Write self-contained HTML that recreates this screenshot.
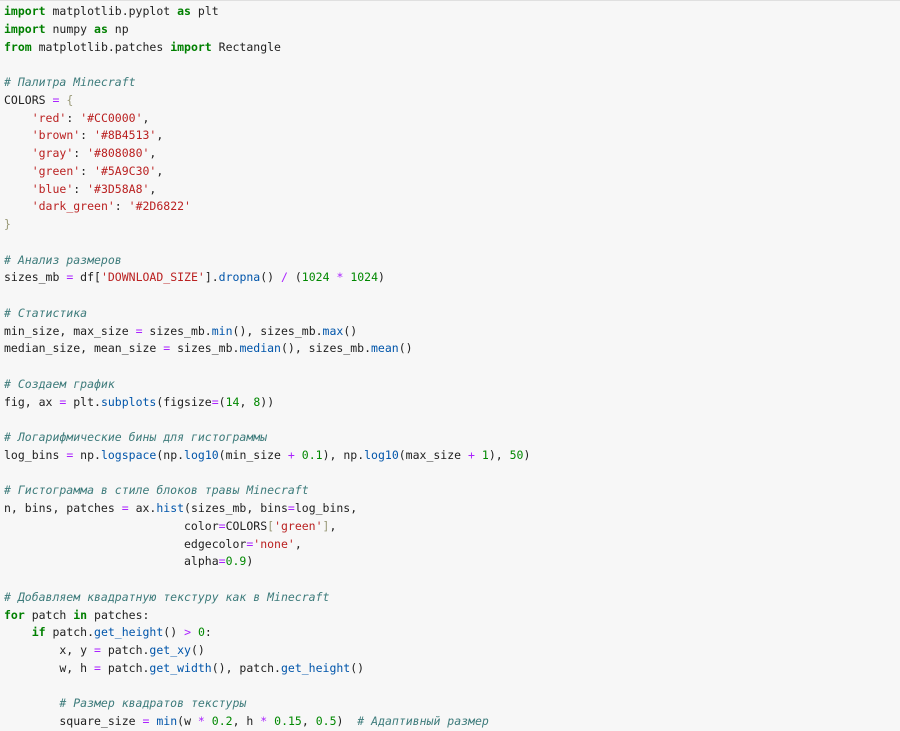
<!DOCTYPE html>
<html><head><meta charset="utf-8"><style>
html,body{margin:0;padding:0;background:#f7f7f7;width:900px;height:727px;overflow:hidden}
.top{position:absolute;top:0;left:0;width:900px;height:1px;background:#e0e0e0}
pre{position:absolute;left:4px;top:3px;margin:0;font-family:"DejaVu Sans Mono","Liberation Mono",monospace;font-size:11.5px;line-height:17.75px;color:#212121}
.k{color:#008000;font-weight:bold}
.c{color:#3d7b7b;font-style:italic}
.s{color:#ba2121}
.o{color:#aa22ff}
.n{color:#008800}
.f{color:#0055aa}
.b{color:#999977}
</style></head><body><div class="top"></div><pre><span class="k">import</span> matplotlib.pyplot <span class="k">as</span> plt
<span class="k">import</span> numpy <span class="k">as</span> np
<span class="k">from</span> matplotlib.patches <span class="k">import</span> Rectangle

<span class="c"># Палитра Minecraft</span>
COLORS <span class="o">=</span> <span class="b">{</span>
    <span class="s">'red'</span>: <span class="s">'#CC0000'</span>,
    <span class="s">'brown'</span>: <span class="s">'#8B4513'</span>,
    <span class="s">'gray'</span>: <span class="s">'#808080'</span>,
    <span class="s">'green'</span>: <span class="s">'#5A9C30'</span>,
    <span class="s">'blue'</span>: <span class="s">'#3D58A8'</span>,
    <span class="s">'dark_green'</span>: <span class="s">'#2D6822'</span>
<span class="b">}</span>

<span class="c"># Анализ размеров</span>
sizes_mb <span class="o">=</span> df[<span class="s">'DOWNLOAD_SIZE'</span>].<span class="f">dropna</span>() <span class="o">/</span> (<span class="n">1024</span> <span class="o">*</span> <span class="n">1024</span>)

<span class="c"># Статистика</span>
min_size, max_size <span class="o">=</span> sizes_mb.<span class="f">min</span>(), sizes_mb.<span class="f">max</span>()
median_size, mean_size <span class="o">=</span> sizes_mb.<span class="f">median</span>(), sizes_mb.<span class="f">mean</span>()

<span class="c"># Создаем график</span>
fig, ax <span class="o">=</span> plt.<span class="f">subplots</span>(figsize<span class="o">=</span>(<span class="n">14</span>, <span class="n">8</span>))

<span class="c"># Логарифмические бины для гистограммы</span>
log_bins <span class="o">=</span> np.<span class="f">logspace</span>(np.<span class="f">log10</span>(min_size <span class="o">+</span> <span class="n">0.1</span>), np.<span class="f">log10</span>(max_size <span class="o">+</span> <span class="n">1</span>), <span class="n">50</span>)

<span class="c"># Гистограмма в стиле блоков травы Minecraft</span>
n, bins, patches <span class="o">=</span> ax.<span class="f">hist</span>(sizes_mb, bins<span class="o">=</span>log_bins,
                          color<span class="o">=</span>COLORS<span class="b">[</span><span class="s">'green'</span><span class="b">]</span>,
                          edgecolor<span class="o">=</span><span class="s">'none'</span>,
                          alpha<span class="o">=</span><span class="n">0.9</span>)

<span class="c"># Добавляем квадратную текстуру как в Minecraft</span>
<span class="k">for</span> patch <span class="k">in</span> patches:
    <span class="k">if</span> patch.<span class="f">get_height</span>() <span class="o">&gt;</span> <span class="n">0</span>:
        x, y <span class="o">=</span> patch.<span class="f">get_xy</span>()
        w, h <span class="o">=</span> patch.<span class="f">get_width</span>(), patch.<span class="f">get_height</span>()

        <span class="c"># Размер квадратов текстуры</span>
        square_size <span class="o">=</span> <span class="f">min</span>(w <span class="o">*</span> <span class="n">0.2</span>, h <span class="o">*</span> <span class="n">0.15</span>, <span class="n">0.5</span>)  <span class="c"># Адаптивный размер</span>
</pre></body></html>
